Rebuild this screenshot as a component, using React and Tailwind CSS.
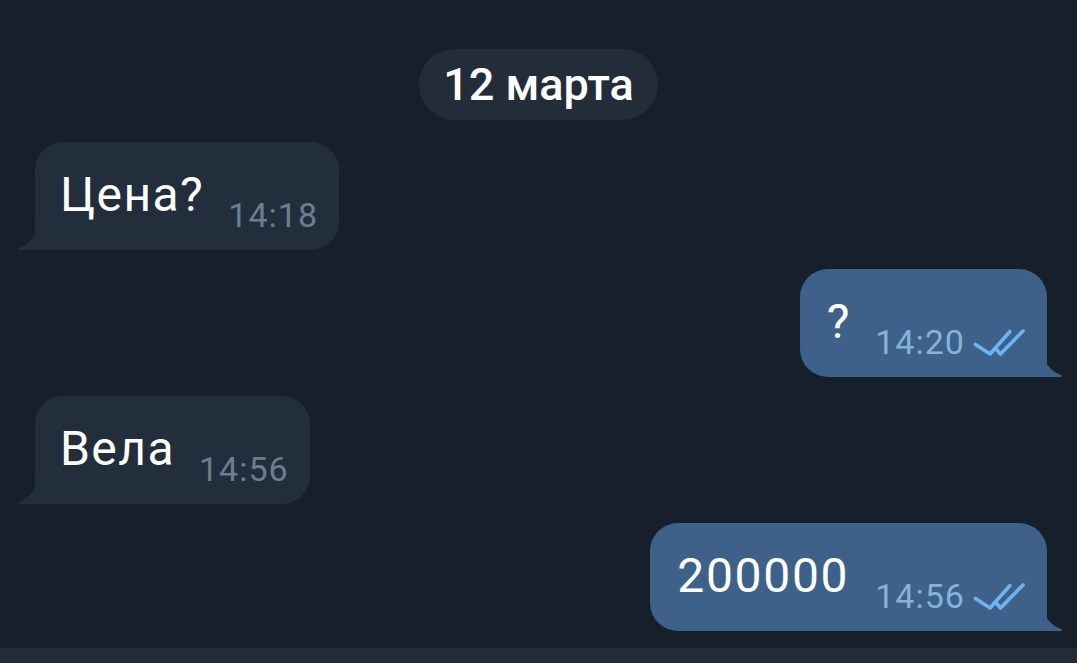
import React from 'react'

const font = { fontFamily: 'Roboto, "Noto Sans", sans-serif' }

const Checks = () => (
  <svg width="52" height="27" viewBox="0 0 52 27" className="mb-[3px] ml-[8px] shrink-0">
    <path d="M2.5 15.5 L17 25 L37 2.5" fill="none" stroke="#6cb4f2" strokeWidth="3.6" strokeLinecap="round" strokeLinejoin="round" />
    <path d="M23.5 20.5 L27.5 25 L50 2" fill="none" stroke="#6cb4f2" strokeWidth="3.6" strokeLinecap="round" strokeLinejoin="round" />
  </svg>
)

const TailLeft = ({ color }) => (
  <svg width="20" height="27" viewBox="0 0 20 27" className="absolute bottom-0 left-[-18px]">
    <path d="M20 0 C20 12 13 21 2 25 C0.5 25.6 0.8 27 2.5 27 L20 27 Z" fill={color} />
  </svg>
)

const TailRight = ({ color }) => (
  <svg width="20" height="27" viewBox="0 0 20 27" className="absolute bottom-0 right-[-16px]">
    <path d="M0 0 C0 12 7 21 18 25 C19.5 25.6 19.2 27 17.5 27 L0 27 Z" fill={color} />
  </svg>
)

const Incoming = ({ text, time }) => (
  <div className="flex pl-[35px]">
    <div className="relative flex h-[108px] items-end rounded-[28px] rounded-bl-none bg-[#232e3c] pl-[25px] pr-[21px] pb-[18px]">
      <span className="mb-[13px] text-[48px] leading-[48px] tracking-[0.03em] text-white">{text}</span>
      <span className="ml-[24px] text-[34px] leading-[34px] tracking-[0.03em] text-[#6e7d8d]">{time}</span>
      <TailLeft color="#232e3c" />
    </div>
  </div>
)

const Outgoing = ({ text, time, gap }) => (
  <div className="flex justify-end pr-[30px]">
    <div className="relative flex h-[108px] items-end rounded-[28px] rounded-br-none bg-[#3e6189] pl-[27px] pr-[22px] pb-[18px]">
      <span className="mb-[13px] text-[48px] leading-[48px] tracking-[0.035em] text-white">{text}</span>
      <span className={`${gap} text-[34px] leading-[34px] tracking-[0.03em] text-[#86b2dc]`}>{time}</span>
      <Checks />
      <TailRight color="#3e6189" />
    </div>
  </div>
)

export default function App() {
  return (
    <div className="flex h-[663px] w-[1077px] flex-col overflow-hidden bg-[#17202a]" style={font}>
      <div className="flex justify-center pt-[49px]">
        <div className="flex h-[71px] items-center rounded-full bg-[#232d39] px-[24px] text-[45px] font-medium text-white">
          12 марта
        </div>
      </div>
      <div className="mt-[22px] flex flex-col gap-[19px]">
        <Incoming text="Цена?" time="14:18" />
        <Outgoing text="?" time="14:20" gap="ml-[24px]" />
        <Incoming text="Вела" time="14:56" />
        <Outgoing text="200000" time="14:56" gap="ml-[26px]" />
      </div>
      <div className="mt-auto h-[15px] bg-[#212c3b]" />
    </div>
  )
}
